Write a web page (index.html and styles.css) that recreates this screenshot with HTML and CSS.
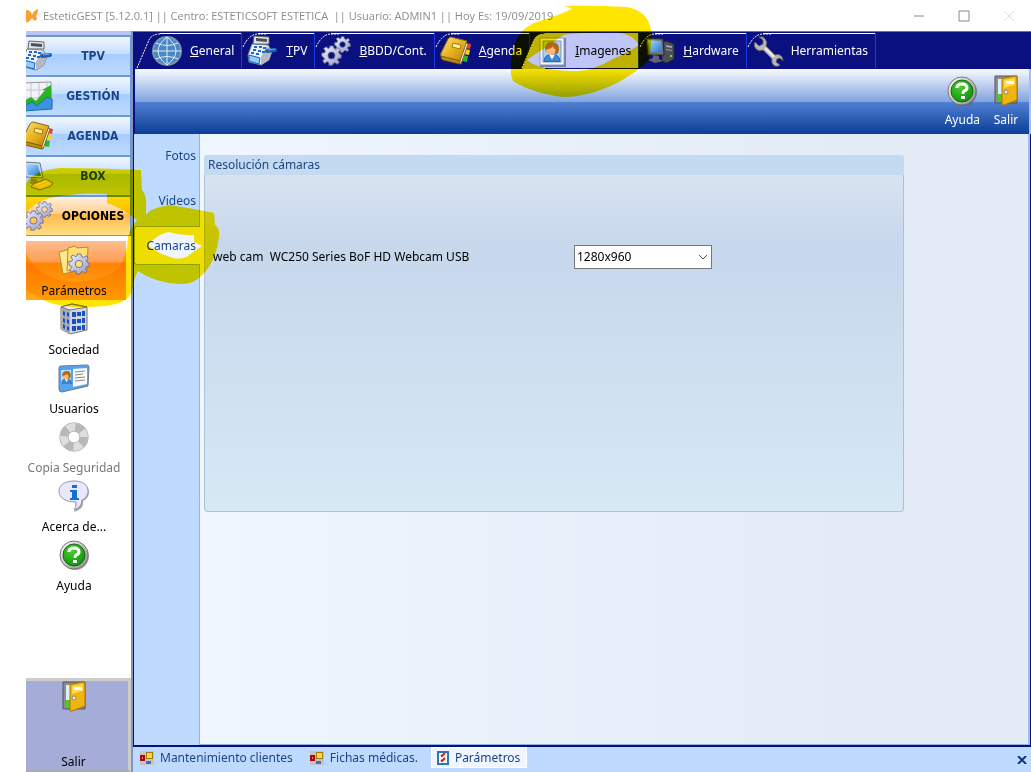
FILE: index.html
```html
<!DOCTYPE html>
<html lang="es">
<head>
    <meta charset="UTF-8">
    <meta name="viewport" content="width=device-width, initial-scale=1.0">
    <title>EsteticGEST</title>
    <link rel="stylesheet" href="styles.css">
</head>
<body>
    <!-- Shared icons -->
    <svg class="sprite" width="0" height="0" aria-hidden="true">
        <defs>
            <linearGradient id="gold" x1="0" y1="0" x2="1" y2="1"><stop offset="0" stop-color="#ffe680"/><stop offset="0.5" stop-color="#e6b422"/><stop offset="1" stop-color="#b87f08"/></linearGradient>
            <linearGradient id="metal" x1="0" y1="0" x2="1" y2="1"><stop offset="0" stop-color="#ffffff"/><stop offset="1" stop-color="#8c8c94"/></linearGradient>
            <linearGradient id="sky" x1="0" y1="0" x2="1" y2="1"><stop offset="0" stop-color="#a8dcff"/><stop offset="1" stop-color="#2878d0"/></linearGradient>
            <linearGradient id="gearFill" x1="0" y1="0" x2="1" y2="1"><stop offset="0" stop-color="#eef0ff"/><stop offset="1" stop-color="#989cc8"/></linearGradient>
            <radialGradient id="greenFill" cx="0.4" cy="0.3" r="0.8"><stop offset="0" stop-color="#4cd030"/><stop offset="1" stop-color="#0a8a08"/></radialGradient>
            <symbol id="gear" viewBox="-12 -12 24 24">
                <g fill="url(#gearFill)" stroke="#686c90" stroke-width="1">
                    <path fill-rule="evenodd" d="M-2-11H2L3-8 5-7 8-9 10-6 8-4 9-2 11-1V3L8 3 7 5 9 8 6 10 4 8 2 9 1 11H-3L-3 8-5 7-8 9-10 6-8 4-9 2-11 1V-3L-8-3-7-5-9-8-6-10-4-8-2-9ZM0-4A4 4 0 1 0 0 4A4 4 0 1 0 0-4Z"/>
                </g>
            </symbol>
            <symbol id="gears" viewBox="0 0 32 32">
                <use href="#gear" x="14" y="1" width="17" height="17"/>
                <use href="#gear" x="1" y="10" width="21" height="21"/>
            </symbol>
            <symbol id="register" viewBox="0 0 32 32">
                <path d="M7 1L22 2 22 9 6 9Z" fill="#dfe4ea" stroke="#666"/>
                <path d="M9 3L20 4 20 7 9 6Z" fill="#4a4f58"/>
                <path d="M5 9L21 10 25 16 22 25 14 30 2 27 1 20Z" fill="#eef1f6" stroke="#777c86"/>
                <path d="M20 11L25 16 22 25 14 30 14 22Z" fill="#b4bac4"/>
                <path d="M2 20L13 23 12 29 2 26Z" fill="#8cccff" stroke="#1c64b8"/>
                <path d="M7 11h3v2H7zM12 11h3v2h-3zM16 12h3v2h-3zM6 14h3v2H6zM11 15h3v2h-3zM15 16h3v2h-3zM4 17h3v2H4zM9 18h3v2H9z" fill="#1868d0"/>
                <path d="M20 16L28 15" stroke="#1c5cb4" stroke-width="4" stroke-linecap="round"/>
                <path d="M21 15L28 14" stroke="#6cb0f8" stroke-width="1"/>
            </symbol>
            <symbol id="book" viewBox="0 0 32 32">
                <path d="M26 8l5 1-1 5-5-1z" fill="#f04030"/><path d="M25 14l5 1-1 5-5-1z" fill="#ffd020"/><path d="M23 20l5 1-1 6-5-1z" fill="#20b838"/>
                <path d="M2 23L21 29 28 9 26 8Z" fill="#fff" stroke="#8c6410"/>
                <path d="M8 4Q9 2 11 2L27 6 20 26 2 22Q0 21 1 18Z" fill="url(#gold)" stroke="#8c6410"/>
                <path d="M13 8l8 2-1 4-8-2z" fill="#ffeb98" stroke="#a87810"/>
                <path d="M1 21L20 26 20 29 3 25Q1 24 1 21Z" fill="#c48c10" stroke="#805c08"/>
            </symbol>
            <symbol id="computer" viewBox="0 0 32 32">
                <path d="M18 8L22 6 30 9 30 24 23 28 18 26Z" fill="#4c5058" stroke="#282828"/>
                <path d="M22 10l6 1v2l-6-1zM22 14l6 1v1l-6-1z" fill="#98a0a8"/><circle cx="27" cy="21" r="1" fill="#8f4"/>
                <path d="M2 3L19 4 20 20 4 20Z" fill="#70747c" stroke="#282828"/>
                <path d="M4 5L17 6 18 17 6 17Z" fill="url(#sky)"/>
                <path d="M9 20l6 1v3l4 2-8 2-7-3 5-2z" fill="#60646c"/>
            </symbol>
            <symbol id="boxpc" viewBox="0 0 32 32">
                <path d="M2 2L18 3 21 18 4 17Z" fill="#d0d8e4" stroke="#69798c"/>
                <path d="M4 4L16 5 19 16 6 15Z" fill="url(#sky)"/>
                <path d="M9 18l6 1 1 4-8 1z" fill="#8c98a8"/>
                <path d="M11 24L24 19 31 23 29 26 18 30 9 27Z" fill="#e8d020" stroke="#807008"/>
                <path d="M14 25l10-4M17 27l10-4" stroke="#fff080" stroke-width="1"/>
            </symbol>
            <symbol id="help" viewBox="0 0 32 32">
                <circle cx="17" cy="17" r="14" fill="#555" opacity="0.6"/>
                <circle cx="16" cy="16" r="14" fill="url(#metal)" stroke="#777"/>
                <circle cx="16" cy="16" r="11" fill="url(#greenFill)" stroke="#186810"/>
                <path d="M11 13Q11 9 16 9Q21 9 21 13Q21 15 18 16Q17 17 17 19" fill="none" stroke="#fff" stroke-width="3"/>
                <rect x="15" y="21" width="4" height="3" fill="#fff"/>
            </symbol>
            <symbol id="door" viewBox="0 0 32 32">
                <path d="M5 1H27V28H5Z" fill="#8c8c8c" stroke="#555"/>
                <path d="M8 4H24V27H8Z" fill="#d8f0ff"/><path d="M8 19H15V27H8Z" fill="#50c820"/>
                <path d="M12 5Q12 3 14 3L25 1Q27 1 27 3V25L14 30H12Z" fill="#f0b410" stroke="#a87808"/>
                <path d="M14 5L25 3V10L14 13Z" fill="#ffd850"/>
                <path d="M16 6h8v3h-8z" fill="#fff"/><circle cx="16" cy="17" r="2" fill="#eee" stroke="#888"/>
            </symbol>
            <symbol id="person" viewBox="0 0 24 24">
                <path d="M3 24Q3 17 8 16H16Q21 17 21 24Z" fill="#3c88d8" stroke="#1458a8"/>
                <path d="M9 16l3 5 3-5z" fill="#fff"/>
                <path d="M4 8Q5 1 12 1Q20 1 20 9Q20 14 17 15H9Q4 13 4 8Z" fill="#b0681c"/>
                <path d="M5 10Q11 9 13 6Q14 9 16 10Q16 16 11 16Q6 16 5 10Z" fill="#ffb878"/>
            </symbol>
            <symbol id="form" viewBox="0 0 14 14">
                <rect width="14" height="14" fill="#c4c4c4"/><path d="M0 4h5v6H0z" fill="#a00c10"/><path d="M2 6h1v2H2z" fill="#ff8080"/>
                <path d="M6 1h7v7H6z" fill="#a87800"/><path d="M7 2h5v5H7z" fill="#ffd850"/><path d="M6 10h5v3H6z" fill="#3870d0"/>
            </symbol>
        </defs>
    </svg>

    <div class="window">
        <header class="titlebar">
            <svg class="logo" viewBox="0 0 12 14" aria-hidden="true"><path d="M0 1Q5 1 6 6Q8 1 12 0Q12 5 10 7L11 10Q9 14 6 9Q3 14 0 13Z" fill="#f8a030"/></svg>
            <h1>EsteticGEST [5.12.0.1] || Centro: ESTETICSOFT ESTETICA &nbsp;|| Usuario: ADMIN1 || Hoy Es: 19/09/2019</h1>
            <div class="window-buttons">
                <button type="button" aria-label="Minimizar"><svg viewBox="0 0 12 12"><path d="M1 6h10" stroke="#888"/></svg></button>
                <button type="button" aria-label="Maximizar"><svg viewBox="0 0 12 12"><path d="M1 1h10v10H1z" fill="none" stroke="#888"/></svg></button>
                <button type="button" aria-label="Cerrar"><svg viewBox="0 0 12 12"><path d="M1 1l10 10M11 1L1 11" stroke="#ddd"/></svg></button>
            </div>
        </header>

        <div class="workspace">
            <aside class="sidebar">
                <nav class="modules">
                    <button type="button"><svg><use href="#register"/></svg><span>TPV</span></button>
                    <button type="button">
                        <svg viewBox="0 0 32 32"><path d="M1 3L29 2 30 27 2 29Z" fill="#f2f2f8" stroke="#999"/><path d="M9 3v25M17 3v25M25 3v25M2 10h27M2 18h27" stroke="#c4c4d0"/><path d="M2 21L9 17 14 21 23 10 20 10 29 5V18L14 28 2 26Z" fill="#28b420"/><path d="M2 26L10 22 15 26 25 17 30 19 30 29 2 31Z" fill="#3c94e0" stroke="#2468b0"/></svg>
                        <span>GESTIÓN</span>
                    </button>
                    <button type="button"><svg><use href="#book"/></svg><span>AGENDA</span></button>
                    <button type="button"><svg><use href="#boxpc"/></svg><span>BOX</span></button>
                    <button type="button" class="current"><svg><use href="#gears"/></svg><span>OPCIONES</span></button>
                </nav>
                <nav class="options">
                    <button type="button" class="current">
                        <svg viewBox="0 0 32 32"><path d="M1 8L12 5 17 27 5 30Z" fill="#ffe890" stroke="#b88c20"/><path d="M10 4L17 2 19 4 30 3 29 25 9 27Z" fill="#ffe070" stroke="#b88c20"/><use href="#gear" x="10" y="9" width="22" height="22"/></svg>
                        <span>Parámetros</span>
                    </button>
                    <button type="button">
                        <svg viewBox="0 0 32 32"><path d="M3 4L14 1 29 4 29 27 12 31 3 26Z" fill="#d4d4da" stroke="#777"/><path d="M3 4L12 6V31L3 26Z" fill="#aaaab4"/><path d="M3 4L14 1 29 4 12 7Z" fill="#eee" stroke="#777"/><path d="M14 9h4v5h-4zM19 9h4v4h-4zM24 8h3v5h-3zM14 16h4v5h-4zM19 16h4v4h-4zM24 15h3v5h-3zM14 23h4v5h-4zM19 23h4v4h-4zM24 22h3v5h-3zM5 8l2 1v4l-2-1zM9 9l2 1v4l-2-1zM5 15l2 1v4l-2-1zM9 16l2 1v4l-2-1zM5 21l2 1v4l-2-1zM9 23l2 1v4l-2-1z" fill="#1454c0"/></svg>
                        <span>Sociedad</span>
                    </button>
                    <button type="button">
                        <svg viewBox="0 0 32 32"><path d="M3 4L29 3Q31 3 31 5L30 24 4 30Q1 30 1 27V6Q1 4 3 4Z" fill="#58a4ec" stroke="#677c94"/><path d="M15 7L29 6V22L15 25Z" fill="#fafafa"/><path d="M17 10l10-1M17 13l8-1M17 16l10-1M17 19l10-1" stroke="#888"/><path d="M3 8h10v14H3z" fill="#b8e0ff"/><use href="#person" x="2" y="8" width="13" height="14"/></svg>
                        <span>Usuarios</span>
                    </button>
                    <button type="button" disabled>
                        <svg viewBox="0 0 32 32"><circle cx="16" cy="16" r="10" fill="none" stroke="#999" stroke-width="9"/><circle cx="16" cy="16" r="10" fill="none" stroke="#dedede" stroke-width="8"/><circle cx="16" cy="16" r="10" fill="none" stroke="#b8b8b8" stroke-width="8" stroke-dasharray="8 8"/></svg>
                        <span>Copia Seguridad</span>
                    </button>
                    <button type="button">
                        <svg viewBox="0 0 32 32"><path d="M17 2C8 2 2 6 2 12C2 18 8 22 17 22Q19 27 16 32Q26 29 25 21C29 19 31 16 31 12C31 6 25 2 17 2Z" fill="#777" opacity="0.7"/><path d="M16 1C7 1 1 5 1 11C1 18 8 22 18 22Q19 26 16 30Q24 27 24 20C28 18 30 15 30 11C30 5 25 1 16 1Z" fill="#e8e8ff" stroke="#9898b4"/><path d="M14 5h5v3h-5zM12 10h7v8h2v2h-9v-2h2v-6h-2z" fill="#1470d0"/></svg>
                        <span>Acerca de...</span>
                    </button>
                    <button type="button"><svg><use href="#help"/></svg><span>Ayuda</span></button>
                </nav>
                <button type="button" class="exit"><svg><use href="#door"/></svg><span>Salir</span></button>
            </aside>

            <main class="main">
                <nav class="tabs">
                    <button type="button" class="first">
                        <svg class="edge" viewBox="0 0 24 36"><path d="M1 35L13 7Q16 1 24 1" fill="none" stroke="#fff" stroke-dasharray="2 1"/></svg>
                        <svg class="icon" viewBox="0 0 32 32"><circle cx="16" cy="16" r="14" fill="#4a88c4" stroke="#7c94ac" stroke-width="2"/><path d="M16 2v28M2 16h28M5 8q11 5 22 0M5 24q11-5 22 0M16 2q-18 14 0 28M16 2q18 14 0 28" fill="none" stroke="#e0ecf8"/></svg>
                        <span><u>G</u>eneral</span>
                    </button>
                    <button type="button"><svg class="edge" viewBox="0 0 24 36"><path d="M1 14Q7 1 16 1H24" fill="none" stroke="#fff" stroke-dasharray="2 1"/></svg><svg class="icon"><use href="#register"/></svg><span><u>T</u>PV</span></button>
                    <button type="button"><svg class="edge" viewBox="0 0 24 36"><path d="M1 14Q7 1 16 1H24" fill="none" stroke="#fff" stroke-dasharray="2 1"/></svg><svg class="icon"><use href="#gears"/></svg><span><u>B</u>BDD/Cont.</span></button>
                    <button type="button"><svg class="edge" viewBox="0 0 24 36"><path d="M1 14Q7 1 16 1H24" fill="none" stroke="#fff" stroke-dasharray="2 1"/></svg><svg class="icon"><use href="#book"/></svg><span><u>A</u>genda</span></button>
                    <button type="button" class="current">
                        <svg class="edge" viewBox="0 0 24 36"><path d="M1 36L13 7Q16 1 24 1V36Z" fill="#bfc5f6"/><path d="M1 35L13 7Q16 1 24 1" fill="none" stroke="#fff" stroke-dasharray="2 1"/></svg>
                        <svg class="icon" viewBox="0 0 32 32"><path d="M4 3H30V32H4Z" fill="#7480a8"/><path d="M4 3H28V30H4Z" fill="#f4f6ff" stroke="#8c98c0"/><path d="M7 6H25V27H7Z" fill="#a8d4f8" stroke="#7890c0"/><use href="#person" x="5" y="6" width="22" height="21"/></svg>
                        <span><u>I</u>magenes</span>
                    </button>
                    <button type="button"><svg class="edge" viewBox="0 0 24 36"><path d="M1 14Q7 1 16 1H24" fill="none" stroke="#fff" stroke-dasharray="2 1"/></svg><svg class="icon"><use href="#computer"/></svg><span><u>H</u>ardware</span></button>
                    <button type="button">
                        <svg class="edge" viewBox="0 0 24 36"><path d="M1 14Q7 1 16 1H24" fill="none" stroke="#fff" stroke-dasharray="2 1"/></svg>
                        <svg class="icon" viewBox="0 0 32 32"><path d="M7 2L11 5 11 9 7 11 3 7Q1 11 4 14Q7 17 11 15L20 24Q19 29 23 31Q26 32 28 30L24 27 25 24 28 23 31 26Q31 22 28 20Q26 19 23 20L14 11Q16 7 13 4Q11 1 7 2Z" fill="#b8b8bc" stroke="#606068"/><path d="M13 13l9 9" stroke="#eee" stroke-width="2"/></svg>
                        <span>Herramientas</span>
                    </button>
                </nav>

                <div class="toolbar">
                    <button type="button"><svg><use href="#help"/></svg><span>Ayuda</span></button>
                    <button type="button"><svg><use href="#door"/></svg><span>Salir</span></button>
                </div>

                <div class="page">
                    <nav class="side-tabs">
                        <button type="button">Fotos</button>
                        <button type="button">Videos</button>
                        <button type="button" class="current">Camaras</button>
                    </nav>
                    <section class="content">
                        <div class="group">
                            <h2>Resolución cámaras</h2>
                            <div class="camera">
                                <label for="resolution">web cam &nbsp;WC250 Series BoF HD Webcam USB</label>
                                <div class="select">
                                    <select id="resolution"><option>1280x960</option></select>
                                    <svg viewBox="0 0 10 6" aria-hidden="true"><path d="M1 1l4 4 4-4" fill="none" stroke="#555"/></svg>
                                </div>
                            </div>
                        </div>
                    </section>
                </div>

                <footer class="windows">
                    <button type="button"><svg><use href="#form"/></svg>Mantenimiento clientes</button>
                    <button type="button"><svg><use href="#form"/></svg>Fichas médicas.</button>
                    <button type="button" class="current"><svg viewBox="0 0 14 14"><path d="M2 1h10v12H2z" fill="#fff" stroke="#2878b8" stroke-width="2"/><path d="M5 4l1 1 3-3M5 9l1 1 3-3" fill="none" stroke="#d02020" stroke-width="2"/></svg>Parámetros</button>
                    <button type="button" class="close" aria-label="Cerrar ventana"><svg viewBox="0 0 10 8"><path d="M1 0l8 8M9 0L1 8" stroke="#103880" stroke-width="2"/></svg></button>
                </footer>
            </main>
        </div>

        <!-- Yellow marker strokes -->
        <svg class="marker" width="700" height="320" aria-hidden="true">
            <g fill="#ffe600" fill-rule="evenodd">
                <path d="M511 75Q510 57 515 43Q521 26 543 20Q559 15 572 9L565 6Q590 5 627 7Q648 11 651 30Q652 45 649 60Q640 70 617 83Q588 97 563 97Q532 93 513 81ZM527 60Q535 54 545 48L563 35Q580 32 617 32Q634 35 639 45Q628 52 613 59Q592 71 577 71Q540 71 527 60Z"/>
                <path d="M26 183Q35 170 60 168Q100 168 141 170L142 190Q147 195 146 207L146 215Q150 208 170 205Q190 208 214 213L215 225Q220 228 219 237Q216 262 202 275Q193 285 180 284Q155 283 138 271Q134 277 132 290Q130 303 105 306Q60 310 42 299L26 290V253Q38 280 75 282Q106 280 119 268Q127 256 128 237Q131 226 137 220Q122 208 107 203V194Q80 192 50 198Q36 202 26 212ZM148 245Q157 234 169 232Q181 236 194 235V242L202 246Q194 251 188 256Q179 261 170 257Q157 253 148 245Z"/>
            </g>
        </svg>
    </div>
</body>
</html>
```
FILE: styles.css
```css
* {
    box-sizing: border-box;
}

body {
    margin: 0;
    background: #fff;
    font-family: "Noto Sans", sans-serif;
    font-size: 12px;
    line-height: 16px;
    color: #000;
}

button {
    margin: 0;
    padding: 0;
    border: none;
    background: none;
    font: inherit;
    color: inherit;
    cursor: pointer;
}

svg {
    flex: none;
}

.sprite {
    position: absolute;
}

.window {
    position: relative;
    display: flex;
    flex-direction: column;
    min-height: 100vh;
    padding-left: 26px;
}

/* Title bar */
.titlebar {
    display: flex;
    align-items: center;
    height: 31px;
    gap: 5px;
}

.titlebar .logo {
    width: 12px;
    height: 14px;
}

.titlebar h1 {
    flex: 1;
    margin: 0;
    font-family: "Open Sans", sans-serif;
    font-size: 11px;
    font-weight: normal;
    color: #8c8c8c;
    white-space: nowrap;
}

.window-buttons {
    display: flex;
}

.window-buttons button {
    width: 45px;
    height: 30px;
}

.window-buttons svg {
    width: 12px;
    height: 12px;
    vertical-align: middle;
}

.workspace {
    flex: 1;
    display: flex;
}

/* Left column */
.sidebar {
    flex: none;
    display: flex;
    flex-direction: column;
    width: 107px;
    border-right: 2px solid #8495bd;
    overflow: hidden;
}

.modules {
    border-top: 4px solid #bbc4f2;
    background: #6b98d6;
    padding: 2px 1px 1px 0;
}

.modules button {
    display: flex;
    align-items: center;
    width: 100%;
    height: 38px;
    margin-bottom: 2px;
    background: linear-gradient(#f2f8ff, #c4ddff 45%, #aacdff 46%, #bddaff);
    font-family: "DejaVu Sans Condensed", sans-serif;
    font-weight: bold;
    color: #1c4587;
}

.modules button:last-child {
    margin-bottom: 0;
}

.modules svg {
    width: 32px;
    height: 32px;
    margin-left: -4px;
}

.modules span {
    flex: 1;
    padding-left: 2px;
}

.modules .current {
    background: linear-gradient(#fff0df, #ffce8c 45%, #ffb84e 46%, #ffdf82);
    color: #000;
}

.options {
    flex: 1;
    padding: 5px 5px 0 0;
}

.options button {
    display: flex;
    flex-direction: column;
    align-items: center;
    justify-content: space-between;
    width: 100%;
    height: 59px;
    padding: 3px 4px 1px 0;
    white-space: nowrap;
}

.options svg,
.exit svg,
.toolbar svg {
    width: 32px;
    height: 32px;
}

.options .current {
    background: linear-gradient(#ffbd91, #ff9d51 36%, #ff8300 37%, #ffaa1c);
}

.options button:disabled {
    color: #777;
}

.exit {
    display: flex;
    flex-direction: column;
    align-items: center;
    justify-content: space-between;
    height: 94px;
    padding-right: 7px;
    border-top: 3px solid #ccc;
    border-right: 3px solid #ccc;
    border-bottom: 2px solid #aaa;
    background: #a6acd8;
}

/* Main area */
.main {
    flex: 1;
    display: flex;
    flex-direction: column;
    min-width: 0;
}

.tabs {
    display: flex;
    height: 38px;
    padding: 1px 0 1px 3px;
    border-top: 1px solid #777;
    background: #0a1080;
}

.tabs button {
    position: relative;
    display: flex;
    align-items: center;
    gap: 7px;
    padding: 0 7px 0 5px;
    border-right: 1px solid #2038e8;
    background: linear-gradient(#fff, #fff) 16px 0 / 100% 1px no-repeat;
    color: #fff;
    white-space: nowrap;
}

.tabs .edge {
    position: absolute;
    left: 0;
    top: 0;
    width: 24px;
    height: 36px;
}

.tabs .icon {
    position: relative;
    width: 32px;
    height: 32px;
}

.tabs .first {
    padding-left: 15px;
    background-position: 24px 0;
}

.tabs .current {
    margin-left: -9px;
    padding-left: 15px;
    background: linear-gradient(#bfc5f6, #bfc5f6) 24px 0 / 100% 100% no-repeat;
    color: #000;
}

.toolbar {
    display: flex;
    justify-content: flex-end;
    gap: 10px;
    height: 65px;
    padding: 6px 7px 6px 0;
    border-left: 2px solid #0a1080;
    border-right: 2px solid #a8bcf0;
    background: linear-gradient(#f8faff, #83a4df 50%, #5180d2 51%, #0b3e98);
    color: #fff;
}

.toolbar button {
    display: flex;
    flex-direction: column;
    align-items: center;
    justify-content: space-between;
}

.page {
    flex: 1;
    display: flex;
    border-left: 1px solid #0a1080;
    border-right: 1px solid #0a1080;
    border-bottom: 2px solid #0a1080;
    background: #bedaff;
}

.side-tabs {
    display: flex;
    flex-direction: column;
    width: 66px;
    padding-top: 2px;
    border-right: 1px solid #92b3df;
    color: #1c4587;
}

.side-tabs button {
    height: 39px;
    margin-bottom: 6px;
    padding-right: 3px;
    text-align: right;
}

.side-tabs .current {
    margin-right: -1px;
    padding-right: 4px;
    border: 1px solid #92b3df;
    border-right: none;
    border-radius: 3px 0 0 3px;
    background: #eef5ff;
}

.content {
    flex: 1;
    padding: 21px 0 21px 4px;
    border-right: 2px solid #a3bbea;
    border-bottom: 1px solid #92b3df;
    background: linear-gradient(90deg, #eff6ff, #e3ebf7 80%);
}

/* Camera resolution box */
.group {
    width: 85%;
    min-height: 357px;
    border: 1px solid #adc2d6;
    border-top: none;
    border-radius: 4px;
    background: linear-gradient(#dde7f3, #c7d7ec 25%, #d6e9f5);
}

.group h2 {
    margin: 0 -1px;
    padding: 2px 4px;
    border-radius: 4px 4px 0 0;
    background: #c3daf1;
    font-size: 12px;
    font-weight: normal;
    color: #1c4587;
}

.camera {
    display: grid;
    grid-template-columns: 361px 138px;
    align-items: center;
    padding: 70px 8px 0;
}

.select {
    display: flex;
    align-items: center;
    padding-right: 3px;
    border: 1px solid #777;
    background: #fff;
}

.select select {
    flex: 1;
    height: 22px;
    padding: 0 2px;
    border: none;
    background: none;
    appearance: none;
    font: inherit;
    color: #000;
}

.select svg {
    width: 10px;
    height: 6px;
}

/* Open windows bar */
.windows {
    display: flex;
    align-items: center;
    height: 25px;
    padding: 0 4px 4px 3px;
    background: #bedaff;
    color: #1c4587;
}

.windows button {
    display: flex;
    align-items: center;
    gap: 6px;
    height: 21px;
    margin-right: 9px;
    padding: 0 4px;
}

.windows svg {
    width: 14px;
    height: 14px;
}

.windows .current {
    gap: 5px;
    padding: 0 6px 0 4px;
    background: #f0f6ff;
    border: 1px solid #fff;
}

.windows .close {
    margin: 4px 0 0 auto;
    padding: 0;
}

.windows .close svg {
    width: 10px;
    height: 8px;
}

.marker {
    position: absolute;
    left: 0;
    top: 0;
    mix-blend-mode: multiply;
    pointer-events: none;
}
```
